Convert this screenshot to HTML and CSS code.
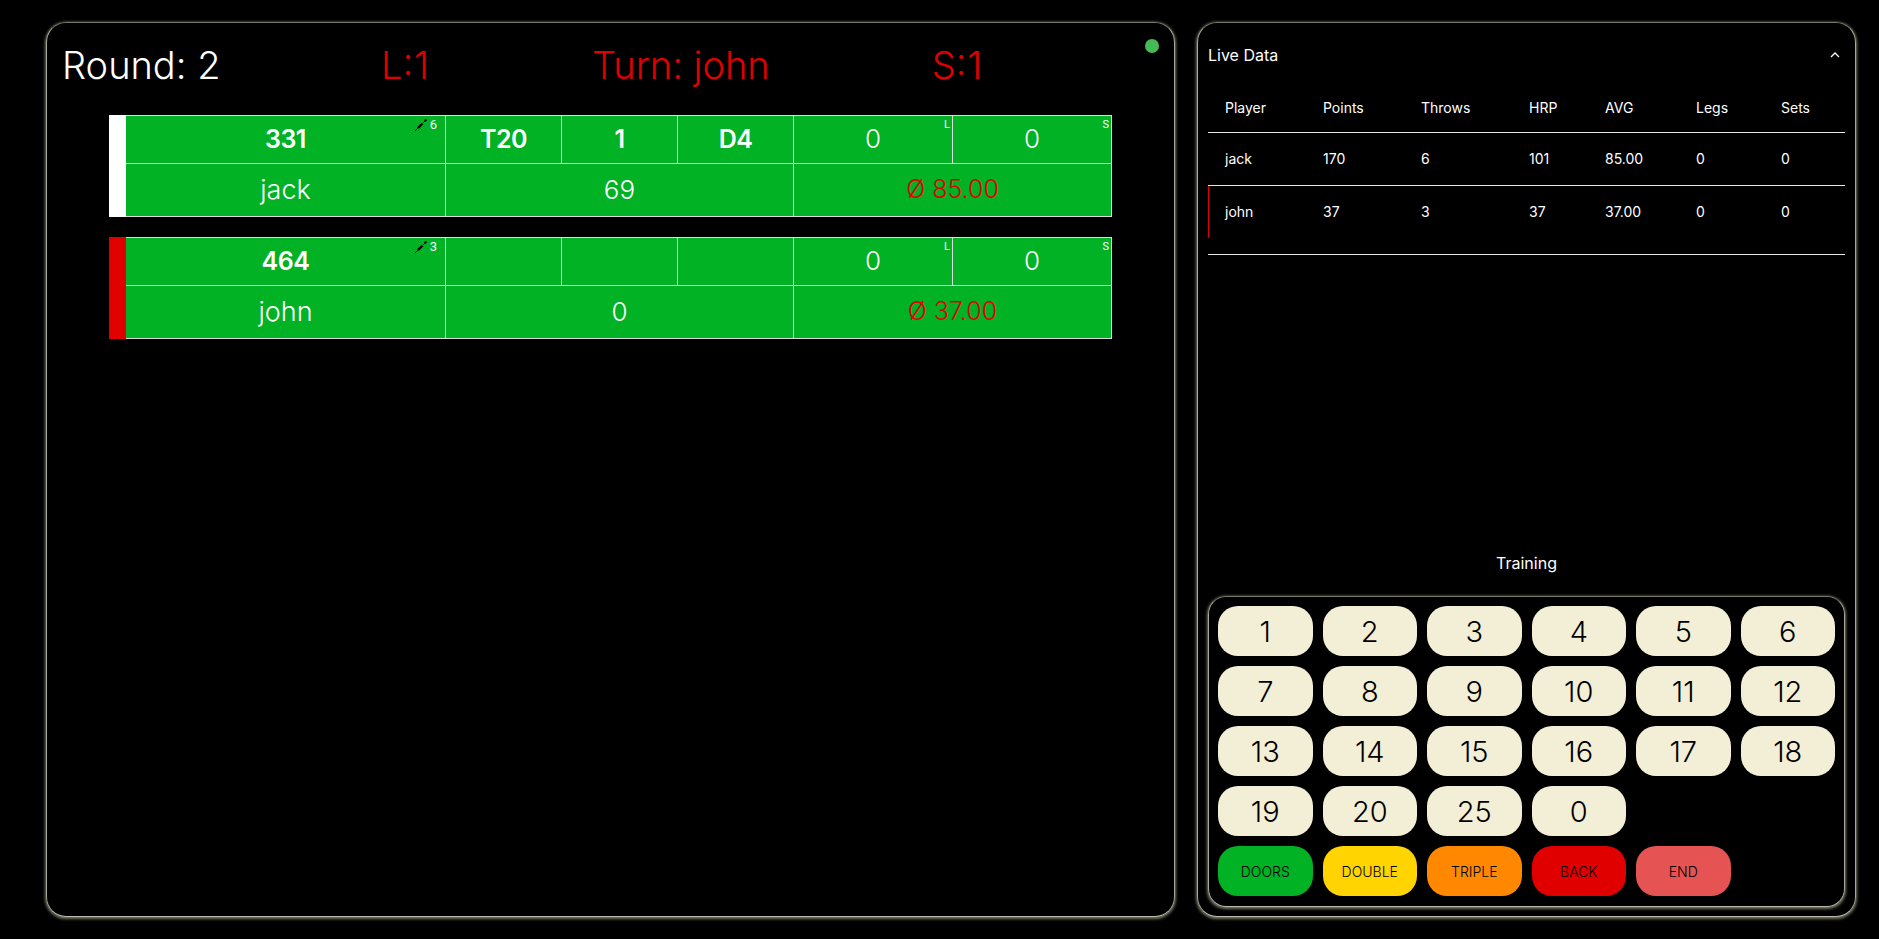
FILE: index.html
```html
<html>
    <head>
        <title>Darts Training</title>
        <link rel="stylesheet" href="styles.css">
    </head>
    <body>
        <div id="page">
            <div class="panel game">
                <span class="status"></span>
                <div class="round">
                    <span class="round-no">Round: 2</span>
                    <span class="round-short">L: 1</span>
                    <span class="round-turn">Turn: john</span>
                    <span class="round-short">S: 1</span>
                </div>

                <div class="player">
                    <div class="bar bar-white"></div>
                    <div class="cell big rest">331
                        <span class="darts">
                            <svg width="12" height="12" viewBox="0 0 12 12"><path class="dart-shaft" d="M0 12L4 8M8 4L10.5 1.5"/><path class="dart-barrel" d="M3 9L7.5 4.5"/><path class="dart-flight" d="M9 1L11 0L12 1L10.5 3Z"/></svg>
                            6
                        </span>
                    </div>
                    <div class="cell big">T20</div>
                    <div class="cell big">1</div>
                    <div class="cell big">D4</div>
                    <div class="cell num">0<span class="corner">L</span></div>
                    <div class="cell num end">0<span class="corner">S</span></div>
                    <div class="cell name">jack</div>
                    <div class="cell num span3 low">69</div>
                    <div class="cell avg span2 low end">Ø 85.00</div>
                </div>

                <div class="player">
                    <div class="bar bar-red"></div>
                    <div class="cell big rest">464
                        <span class="darts">
                            <svg width="12" height="12" viewBox="0 0 12 12"><path class="dart-shaft" d="M0 12L4 8M8 4L10.5 1.5"/><path class="dart-barrel" d="M3 9L7.5 4.5"/><path class="dart-flight" d="M9 1L11 0L12 1L10.5 3Z"/></svg>
                            3
                        </span>
                    </div>
                    <div class="cell big"></div>
                    <div class="cell big"></div>
                    <div class="cell big"></div>
                    <div class="cell num">0<span class="corner">L</span></div>
                    <div class="cell num end">0<span class="corner">S</span></div>
                    <div class="cell name">john</div>
                    <div class="cell num span3 low">0</div>
                    <div class="cell avg span2 low end">Ø 37.00</div>
                </div>
            </div>

            <div class="panel side">
                <div class="live-head">
                    <span>Live Data</span>
                    <svg width="10" height="6" viewBox="0 0 10 6"><path class="chevron" d="M1 5L5 1L9 5"/></svg>
                </div>
                <table class="live">
                    <colgroup>
                        <col class="c-player"><col class="c-points"><col class="c-throws"><col class="c-hrp"><col class="c-avg"><col class="c-legs"><col class="c-sets">
                    </colgroup>
                    <tr><th>Player</th><th>Points</th><th>Throws</th><th>HRP</th><th>AVG</th><th>Legs</th><th>Sets</th></tr>
                    <tr><td>jack</td><td>170</td><td>6</td><td>101</td><td>85.00</td><td>0</td><td>0</td></tr>
                    <tr class="current"><td>john</td><td>37</td><td>3</td><td>37</td><td>37.00</td><td>0</td><td>0</td></tr>
                    <tr class="spacer"><td colspan="7"></td></tr>
                </table>

                <div class="training">Training</div>
                <div class="keypad">
                    <button class="key">1</button>
                    <button class="key">2</button>
                    <button class="key">3</button>
                    <button class="key">4</button>
                    <button class="key">5</button>
                    <button class="key">6</button>
                    <button class="key">7</button>
                    <button class="key">8</button>
                    <button class="key">9</button>
                    <button class="key">10</button>
                    <button class="key">11</button>
                    <button class="key">12</button>
                    <button class="key">13</button>
                    <button class="key">14</button>
                    <button class="key">15</button>
                    <button class="key">16</button>
                    <button class="key">17</button>
                    <button class="key">18</button>
                    <button class="key">19</button>
                    <button class="key">20</button>
                    <button class="key">25</button>
                    <button class="key">0</button>
                    <button class="key action doors">DOORS</button>
                    <button class="key action double">DOUBLE</button>
                    <button class="key action triple">TRIPLE</button>
                    <button class="key action back">BACK</button>
                    <button class="key action finish">END</button>
                </div>
            </div>
        </div>
    </body>
</html>
```

FILE: styles.css
```css
html, body{
    margin: 0;
    height: 100%;
    background-color: #000;
    color: #fff;
    font-family: Inter, "Open Sans", sans-serif;
    font-weight: 300;
    overflow: hidden;
}
#page{
    display: flex;
    gap: 22px;
    box-sizing: border-box;
    height: 939px;
    padding: 22px 23px 22px 46px;
}
.panel, .keypad{
    border: 1px solid #a9a997;
    border-top-color: #77776a;
    border-bottom-color: #bcbca8;
    box-shadow: 0 1px 3px 1px #77776a;
}
.panel{
    position: relative;
    box-sizing: border-box;
    border-radius: 20px;
}
.game{
    width: 1129px;
    padding-left: 62px;
}
.side{
    display: flex;
    flex-direction: column;
    width: 659px;
    padding: 10px 10px 9px;
}
.status{
    position: absolute;
    top: 16px;
    right: 15px;
    width: 14px;
    height: 14px;
    border-radius: 50%;
    background-color: #45b955;
}

.round{
    display: grid;
    grid-template-columns: 156px 374px 174px 382px;
    align-items: center;
    height: 92px;
    margin-left: -47px;
    padding-bottom: 8px;
    box-sizing: border-box;
    font-size: 38px;
    font-weight: 350;
    color: #e00000;
    text-align: center;
    white-space: nowrap;
}
.round-no{
    color: #fff;
    text-align: left;
}
.round-short{
    word-spacing: -10px;
}

.player{
    display: grid;
    grid-template-columns: 17px 319px 116px 116px 116px 159px 160px;
    grid-template-rows: 48px 54px;
    width: 1003px;
    margin-bottom: 20px;
    background-color: #00b224;
}
.bar{
    grid-row: span 2;
}
.bar-white{
    background-color: #fff;
}
.bar-red{
    background-color: #e00000;
}
.cell{
    position: relative;
    display: flex;
    align-items: center;
    justify-content: center;
    padding-bottom: 2px;
    box-sizing: border-box;
    border-top: 1px solid #dcdcdc;
    border-left: 1px solid #dcdcdc;
    font-size: 26px;
}
.cell.rest{
    border-left: none;
}
.cell.name{
    border-left: none;
    border-bottom: 1px solid #dcdcdc;
    font-size: 27px;
}
.cell.low{
    border-bottom: 1px solid #dcdcdc;
}
.cell.end{
    border-right: 1px solid #dcdcdc;
}
.big{
    font-size: 25px;
    font-weight: 600;
    letter-spacing: -0.5px;
}
.cell.avg{
    font-size: 25px;
    font-weight: 350;
    color: #e00000;
}
.span3{
    grid-column: span 3;
}
.span2{
    grid-column: span 2;
}
.corner{
    position: absolute;
    top: 2px;
    right: 2px;
    font-size: 11px;
    font-family: Roboto, sans-serif;
    font-weight: 400;
}
.darts{
    position: absolute;
    top: 1px;
    right: 8px;
    display: flex;
    align-items: center;
    gap: 3px;
    font-size: 13px;
    letter-spacing: 0;
    font-family: Roboto, sans-serif;
    font-weight: 400;
}
.dart-shaft{
    stroke: #000;
    stroke-width: 1;
    fill: none;
}
.dart-barrel{
    stroke: #000;
    stroke-width: 2.4;
    fill: none;
}
.dart-flight{
    fill: #000;
}

.live-head{
    display: flex;
    align-items: center;
    justify-content: space-between;
    box-sizing: border-box;
    height: 46px;
    padding: 0 5px 2px 0;
    font-size: 16px;
    font-weight: 400;
}
.chevron{
    stroke: #fff;
    stroke-width: 1.3;
    fill: none;
}
.live{
    width: 637px;
    border-collapse: collapse;
    table-layout: fixed;
    font-size: 14px;
    font-weight: 400;
}
.c-player, .c-points{
    width: 98px;
}
.c-throws{
    width: 108px;
}
.c-hrp{
    width: 76px;
}
.c-avg{
    width: 91px;
}
.c-legs{
    width: 85px;
}
.live th{
    height: 53px;
    padding: 4px 0 0 17px;
    box-sizing: border-box;
    border-bottom: 1px solid #e4e4e4;
    font-weight: 400;
    text-align: left;
}
.live td{
    height: 53px;
    padding: 0 0 0 17px;
    border-bottom: 1px solid #e4e4e4;
}
.live tr.current td{
    border-bottom: none;
}
.live tr.current td:first-child{
    box-shadow: inset 1px 0 0 #e00000;
}
.live tr.spacer td{
    height: 16px;
    padding: 0;
}

.training{
    margin-top: auto;
    margin-bottom: 23px;
    font-size: 16px;
    font-weight: 400;
    line-height: 20px;
    text-align: center;
}
.keypad{
    display: grid;
    grid-template-columns: repeat(6, 1fr);
    grid-auto-rows: 50px;
    gap: 10px;
    padding: 9px 9px 10px;
    border-radius: 18px;
}
.key{
    border: none;
    border-radius: 20px;
    padding: 0;
    background-color: #f3efd6;
    color: #000;
    font-family: inherit;
    font-size: 29px;
    font-weight: 300;
}
.key.action{
    font-size: 14px;
}
.key.doors{
    grid-column: 1;
    background-color: #00b224;
}
.key.double{
    background-color: #ffd400;
}
.key.triple{
    background-color: #ff8800;
}
.key.back{
    background-color: #e00000;
}
.key.finish{
    background-color: #e55353;
}
```
